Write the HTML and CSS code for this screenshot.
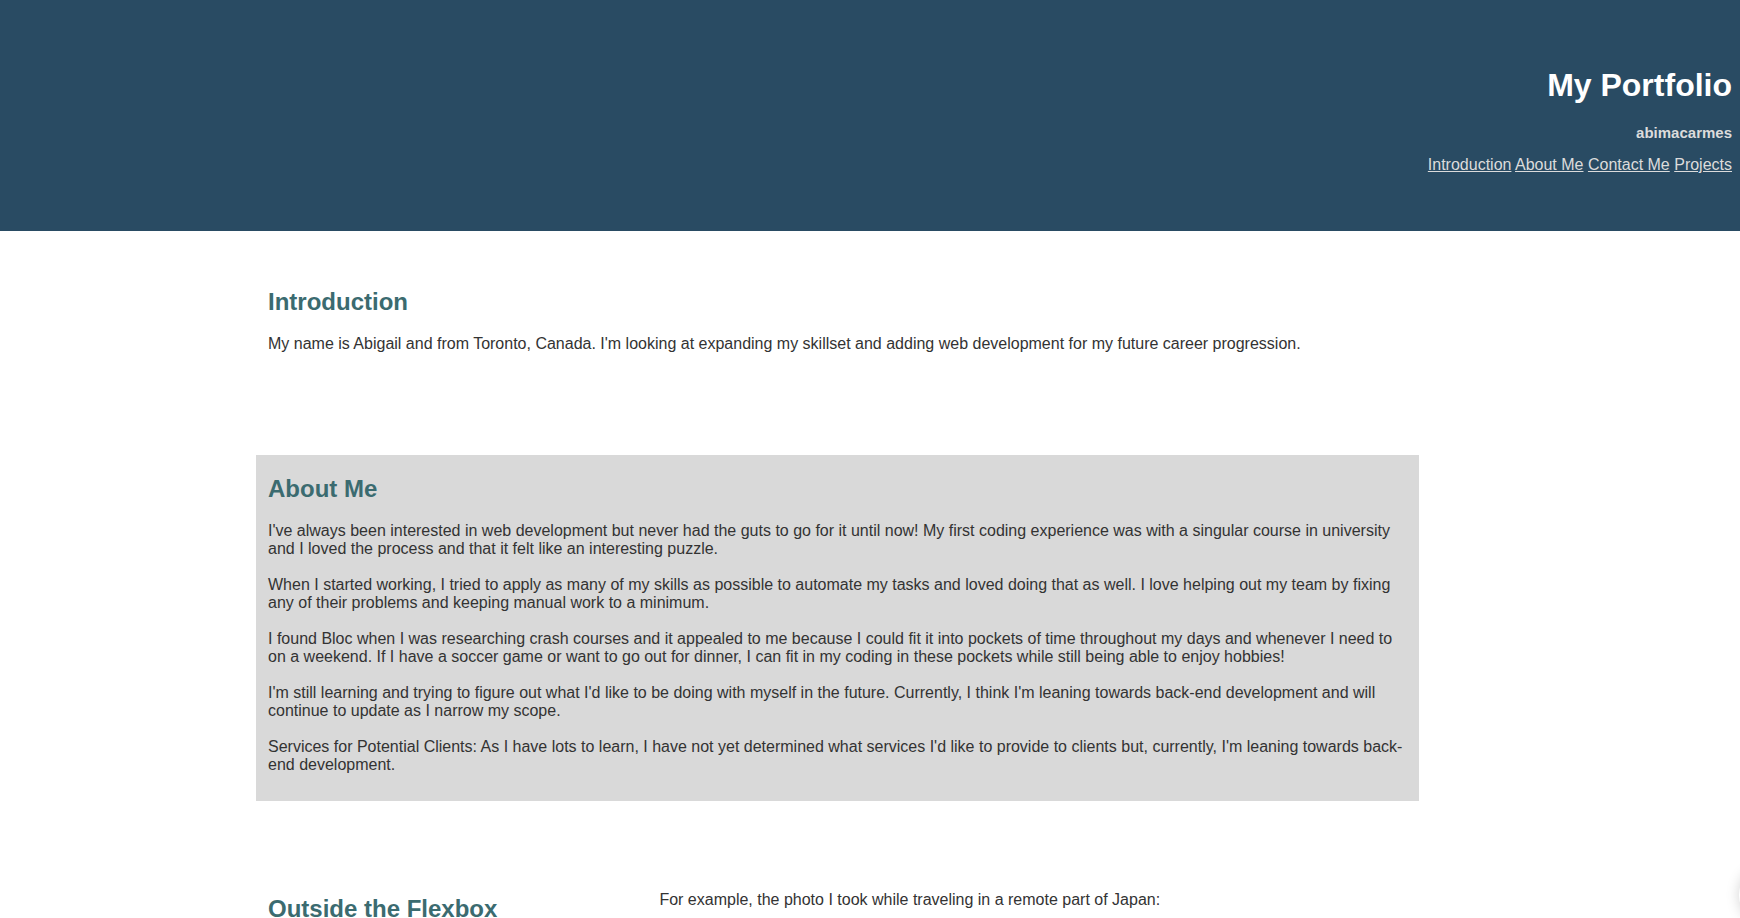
FILE: index.html
```html
<!DOCTYPE html>
<html lang="en">
<head>
<meta charset="utf-8">
<title>My Portfolio</title>
<link rel="stylesheet" href="styles.css">
</head>
<body>
<header class="banner">
  <h1 class="banner-title">My Portfolio</h1>
  <p class="banner-name">abimacarmes</p>
  <nav class="banner-nav">
    <a href="#introduction">Introduction</a>
    <a href="#about">About Me</a>
    <a href="#contact">Contact Me</a>
    <a href="#projects">Projects</a>
  </nav>
</header>
<main class="content">
  <section class="section" id="introduction">
    <h2>Introduction</h2>
    <p>My name is Abigail and from Toronto, Canada. I'm looking at expanding my skillset and adding web development for my future career progression.</p>
  </section>
  <section class="section about" id="about">
    <h2>About Me</h2>
    <p>I've always been interested in web development but never had the guts to go for it until now! My first coding experience was with a singular course in university and I loved the process and that it felt like an interesting puzzle.</p>
    <p>When I started working, I tried to apply as many of my skills as possible to automate my tasks and loved doing that as well. I love helping out my team by fixing any of their problems and keeping manual work to a minimum.</p>
    <p>I found Bloc when I was researching crash courses and it appealed to me because I could fit it into pockets of time throughout my days and whenever I need to on a weekend. If I have a soccer game or want to go out for dinner, I can fit in my coding in these pockets while still being able to enjoy hobbies!</p>
    <p>I'm still learning and trying to figure out what I'd like to be doing with myself in the future. Currently, I think I'm leaning towards back-end development and will continue to update as I narrow my scope.</p>
    <p>Services for Potential Clients: As I have lots to learn, I have not yet determined what services I'd like to provide to clients but, currently, I'm leaning towards back-end development.</p>
  </section>
  <section class="section flexbox">
    <h2>Outside the Flexbox</h2>
    <p>For example, the photo I took while traveling in a remote part of Japan:</p>
  </section>
</main>
<div class="chat-bubble"></div>
</body>
</html>
```
FILE: styles.css
```css
html {
  scrollbar-width: none;
}

body {
  margin: 0;
  font: 16px/18px "Liberation Sans", Arial, sans-serif;
  color: #333;
  background: #fff;
}

.banner {
  padding: 64px 8px 57px;
  background: #294b63;
  color: #dcdcdc;
  text-align: right;
}

.banner-title {
  margin: 0;
  font-size: 32px;
  line-height: 42px;
  color: #fff;
}

.banner-name {
  margin: 18px 0 14px;
  font-size: 15px;
  font-weight: bold;
}

.banner-nav a {
  color: #dcdcdc;
}

.content {
  margin: 0 321px 0 256px;
  padding-top: 37px;
}

.section {
  margin-bottom: 75px;
  padding: 16px 12px 9px;
}

.section:last-child {
  margin-bottom: 0;
  padding-bottom: 0;
}

.section h2 {
  margin: 4px 0 19px;
  font-size: 24px;
  line-height: 28px;
  color: #3b6b70;
}

.section p {
  margin: 0 0 18px;
}

.about {
  margin-bottom: 74px;
  background: #d9d9d9;
}

.flexbox {
  display: grid;
  grid-template-columns: 100fr 191fr;
}

/* floating button parked past the right edge; only its glow shows */
.chat-bubble {
  position: fixed;
  right: -59px;
  bottom: -7px;
  width: 60px;
  height: 60px;
  border-radius: 50%;
  background: #fff;
  box-shadow: 0 0 14px rgba(0, 0, 0, 0.18);
}

@media (max-width: 1000px) {
  .content {
    margin: 0 16px;
  }
}
```
